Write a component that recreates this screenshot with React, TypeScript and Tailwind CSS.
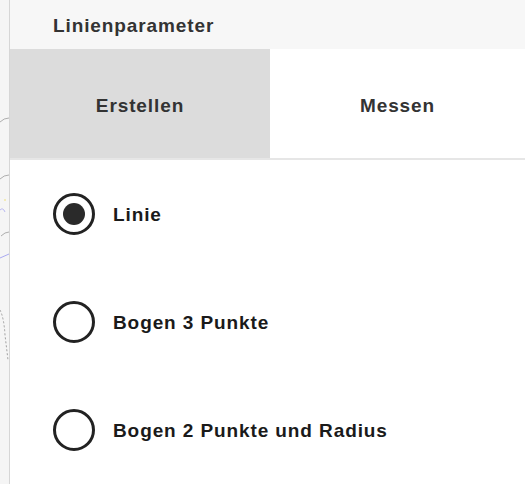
import { useState } from "react";

const options = ["Linie", "Bogen 3 Punkte", "Bogen 2 Punkte und Radius"];

export default function App() {
  const [tab, setTab] = useState("erstellen");
  const [selected, setSelected] = useState(0);

  return (
    <div className="flex h-[484px] w-[525px] overflow-hidden bg-white font-['Liberation_Sans',Arial,sans-serif]">
      {/* map canvas peeking out on the left */}
      <div className="h-full w-[10px] shrink-0 border-r border-[#d6d6d6] bg-[#f5f5f5]">
        <svg width="9" height="484" viewBox="0 0 9 484" fill="none">
          <path d="M0 122 Q4 118 9 118" stroke="#9a9a9a" strokeWidth="0.8" />
          <path d="M0 179 Q4 175 9 175" stroke="#9a9a9a" strokeWidth="0.8" />
          <path d="M1 236 Q5 232 9 232" stroke="#9a9a9a" strokeWidth="0.8" />
          <path d="M0 210 Q3 207 5 212" stroke="#a9a9f0" strokeWidth="0.8" />
          <path d="M0 258 L9 254" stroke="#a9a9f0" strokeWidth="1" />
          <path d="M0 310 Q4 318 5 335 L8 360" stroke="#8a8a8a" strokeWidth="0.8" strokeDasharray="2 2" />
          <circle cx="5" cy="200" r="1" fill="#f0e6a0" />
        </svg>
      </div>

      <div className="flex flex-1 flex-col">
        <div className="flex h-[50px] items-center bg-[#f7f7f7] pl-[43px] pt-[4px] text-[19px] font-bold tracking-[0.9px] text-[#333]">
          Linienparameter
        </div>

        <div className="flex h-[113px] border-b-2 border-[#e6e6e6]">
          <button
            type="button"
            onClick={() => setTab("erstellen")}
            className={`flex w-[260px] items-center justify-center pt-[5px] text-[19px] font-bold tracking-[0.9px] text-[#333] ${
              tab === "erstellen" ? "bg-[#dcdcdc]" : "bg-white"
            }`}
          >
            Erstellen
          </button>
          <button
            type="button"
            onClick={() => setTab("messen")}
            className={`flex flex-1 items-center justify-center pt-[5px] text-[19px] font-bold tracking-[0.9px] text-[#333] ${
              tab === "messen" ? "bg-[#dcdcdc]" : "bg-white"
            }`}
          >
            Messen
          </button>
        </div>

        <div className="flex flex-col">
          {options.map((label, i) => (
            <button
              key={label}
              type="button"
              onClick={() => setSelected(i)}
              className="flex h-[108px] items-center gap-[18px] pl-[43px] text-left"
            >
              <span className="flex h-[42px] w-[42px] items-center justify-center rounded-full border-[3px] border-[#222]">
                {selected === i ? (
                  <span className="h-[22px] w-[22px] rounded-full bg-[#2a2a2a]" />
                ) : null}
              </span>
              <span className="pt-[2px] text-[19px] font-bold tracking-[0.9px] text-[#1a1a1a]">
                {label}
              </span>
            </button>
          ))}
        </div>
      </div>
    </div>
  );
}
